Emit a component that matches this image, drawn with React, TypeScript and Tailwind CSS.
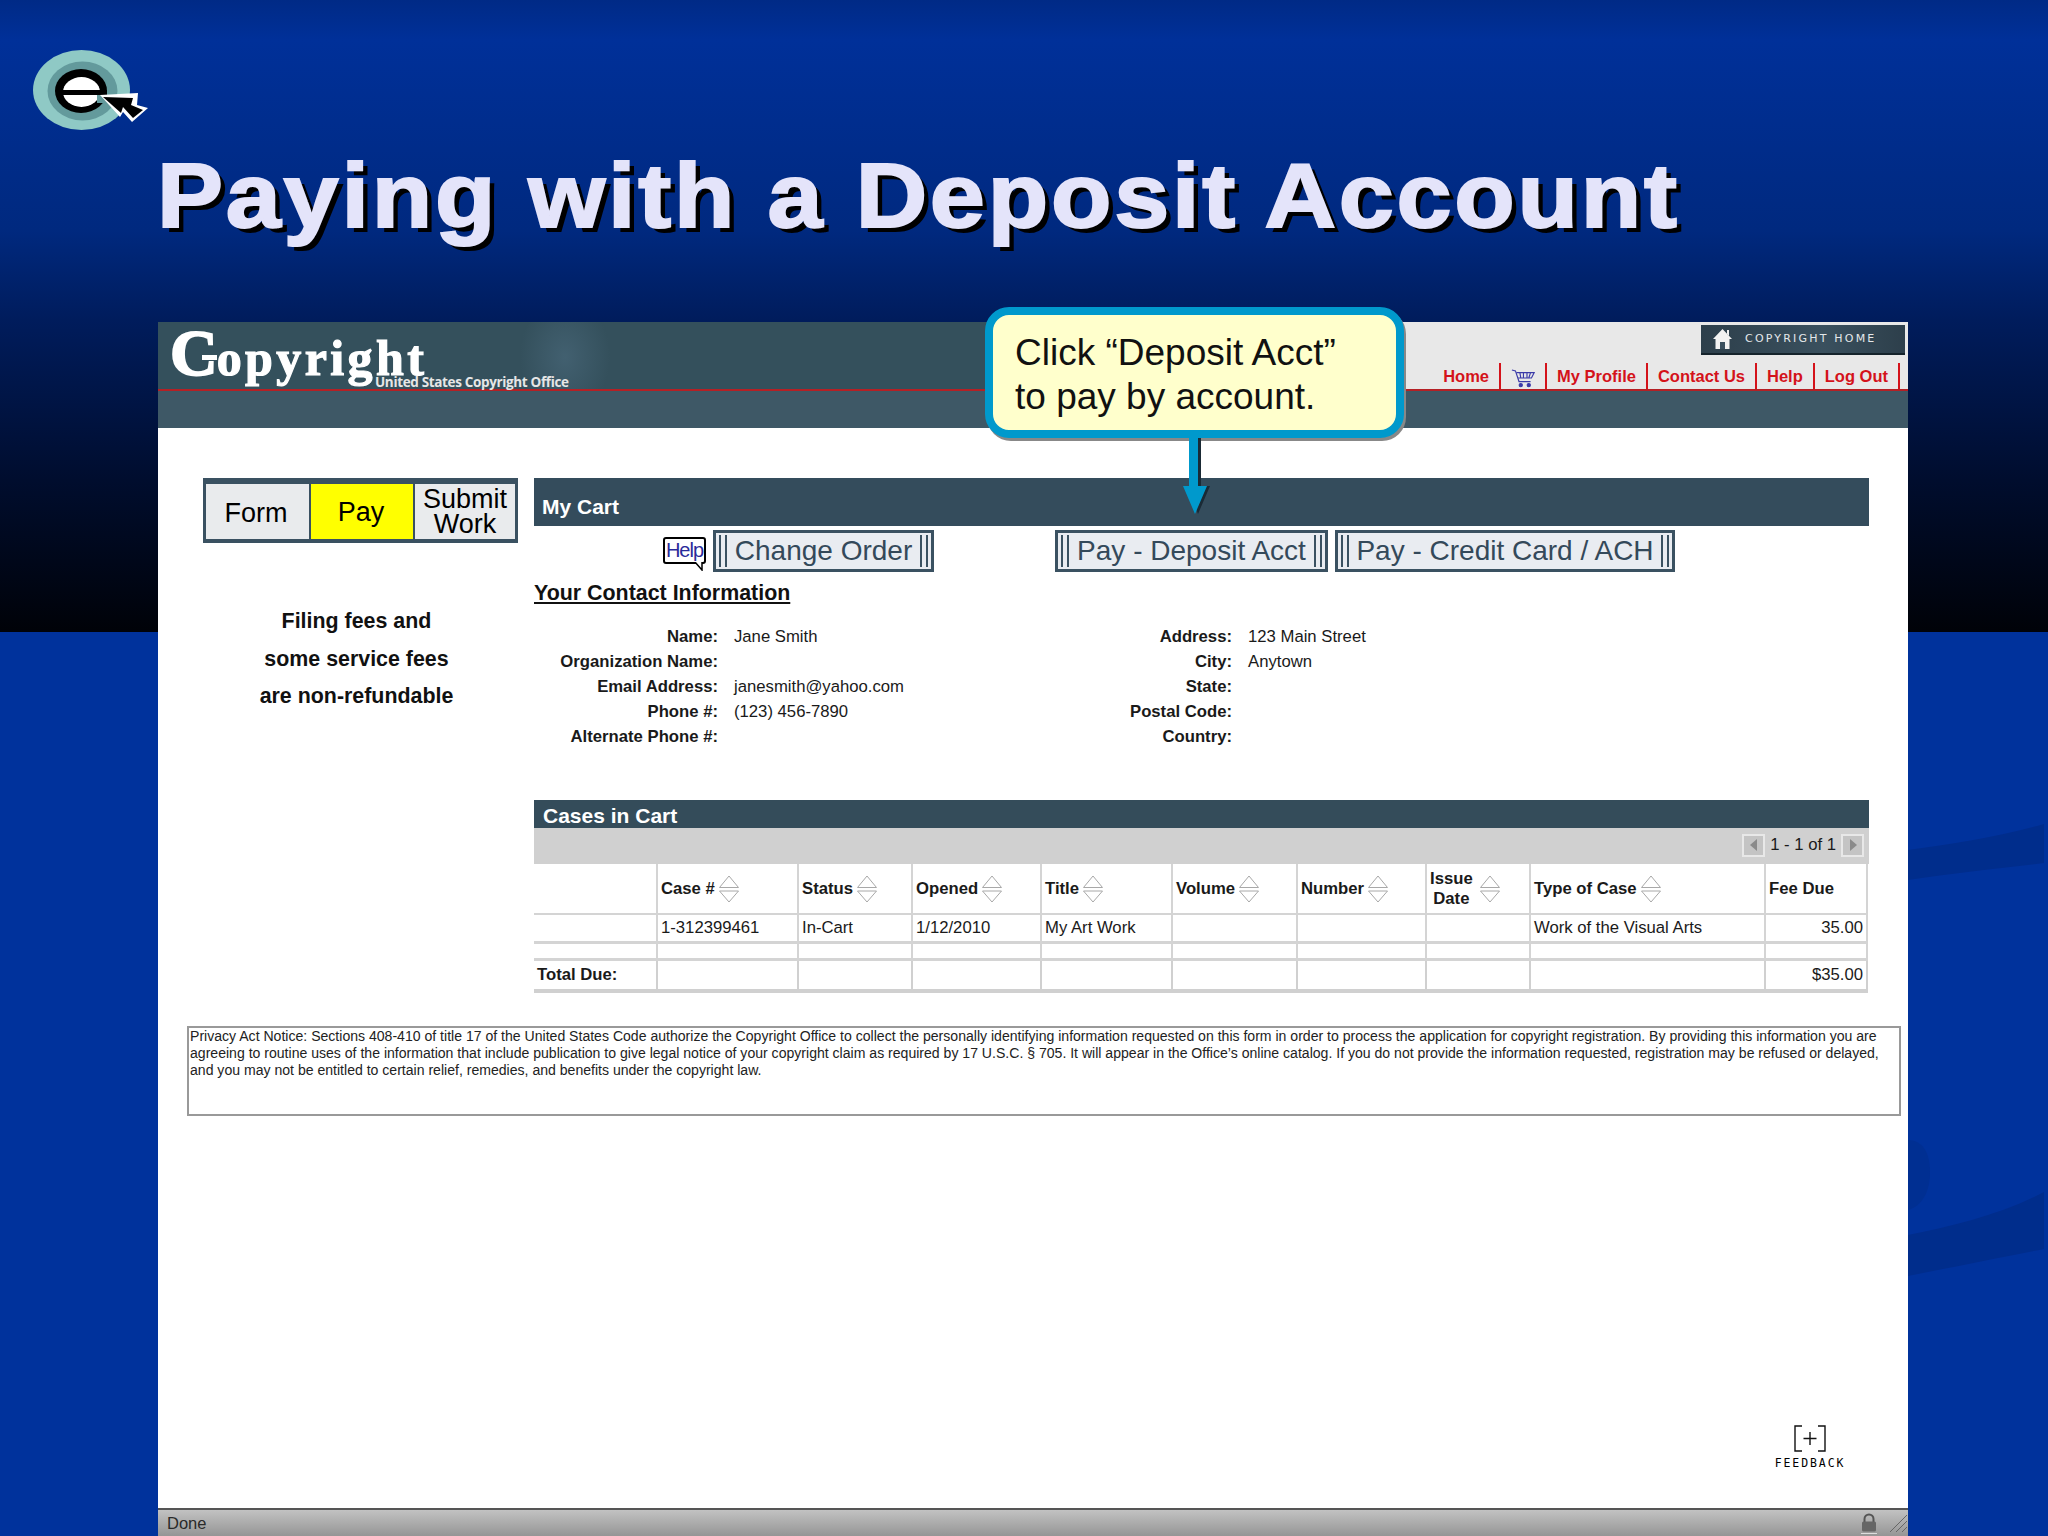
const sans = "font-['Liberation_Sans',Arial,sans-serif]";

function Logo() {
  return (
    <svg width="120" height="90" viewBox="0 0 120 90" className="block">
      <ellipse cx="48.5" cy="40" rx="48.5" ry="40" fill="#8fc9c5" />
      <ellipse cx="49.5" cy="41" rx="35" ry="29.5" fill="#639a9c" />
      <ellipse cx="48" cy="41" rx="26" ry="22" fill="#000" />
      <ellipse cx="48.5" cy="42" rx="18.5" ry="15" fill="#fff" />
      <rect x="28" y="40" width="46" height="5" fill="#000" />
      <rect x="64" y="45" width="12" height="8" fill="#639a9c" />
      <path d="M67 45 L105 43 L104 55 L115 58 L99 72 L90 62 L87 67 Z" fill="#fff" />
      <path d="M70 47 L100 48 L98 55 L110 60 L100 68 L90 57 L88 63 Z" fill="#000" />
    </svg>
  );
}

function SortIcon() {
  return (
    <svg width="22" height="28" viewBox="0 0 22 28" className="shrink-0">
      <path d="M1.5 12.5 L11 1 L20.5 12.5 Z M1.5 16 L11 27 L20.5 16 Z" fill="#fff" stroke="#a8a8a8" strokeWidth="1" />
    </svg>
  );
}

function Barred({ label, w }: { label: string; w: string }) {
  return (
    <div className={`${w} h-[42px] border-[3px] border-[#3a5161] bg-[#e9ecf1] flex items-center justify-between px-[3px] text-[28px] text-[#34495a]`}>
      <span className="w-[8px] h-[32px] border-x-[2px] border-[#3a5161]" />
      <span className="whitespace-nowrap">{label}</span>
      <span className="w-[8px] h-[32px] border-x-[2px] border-[#3a5161]" />
    </div>
  );
}

function Field({ label, value, w }: { label: string; value?: string; w: string }) {
  return (
    <div className="flex h-[25px] items-center">
      <span className={`${w} text-right font-bold whitespace-nowrap`}>{label}</span>
      <span className="ml-[16px] whitespace-nowrap">{value}</span>
    </div>
  );
}

const colWidths = ["w-[124px]", "w-[141px]", "w-[114px]", "w-[129px]", "w-[131px]", "w-[125px]", "w-[129px]", "w-[104px]", "w-[235px]", "w-[102px]"];
const headers = ["", "Case #", "Status", "Opened", "Title", "Volume", "Number", "", "Type of Case", "Fee Due"];

function HeaderCell({ label, index }: { label: string; index: number }) {
  if (index === 0) return <th className="border-r-2 border-[#d4d4d4] bg-white" />;
  if (index === 7) {
    return (
      <th className="border-r-2 border-[#d4d4d4] bg-white px-[3px] text-left font-bold">
        <div className="flex items-center gap-[6px] leading-[20px]">
          <span className="text-center">Issue<br />Date</span>
          <SortIcon />
        </div>
      </th>
    );
  }
  return (
    <th className="border-r-2 border-[#d4d4d4] bg-white px-[3px] text-left font-bold">
      <div className="flex items-center gap-[3px]">
        <span className="whitespace-nowrap">{label}</span>
        {index !== 9 && <SortIcon />}
      </div>
    </th>
  );
}

export default function App() {
  return (
    <div className={`relative w-[2048px] h-[1536px] overflow-hidden flex flex-col bg-[linear-gradient(180deg,#002a86_0px,#003099_40px,#00297f_230px,#001c5c_320px,#000d2e_480px,#000208_632px,#00329c_632px,#00329c_100%)] ${sans}`}>
      <svg width="140" height="904" viewBox="0 0 140 904" className="absolute right-0 top-[632px]">
        <path d="M0 218 C45 212 95 204 136 192 V231 C95 236 45 241 0 248 Z" fill="#002d8c" />
        <path d="M0 603 C45 594 95 582 136 560 V617 C95 625 45 635 0 644 Z" fill="#002d8c" />
        <path d="M0 508 C14 508 22 520 22 540 C22 560 14 574 0 578 Z" fill="#002f92" />
      </svg>

      <div className="relative h-[50px] shrink-0" />
      <div className="relative pl-[33px] h-[90px] shrink-0"><Logo /></div>
      <h1 className="relative pl-[157px] h-[182px] pt-[6px] shrink-0 text-[90px] leading-[100px] font-bold text-[#e4e4fa] [text-shadow:5px_5px_0_#000] [-webkit-text-stroke:2px_#e4e4fa] whitespace-nowrap">
        <span className="inline-block origin-left scale-x-[1.1] tracking-[2.5px]">Paying with a Deposit Account</span>
      </h1>

      <div className="relative ml-[158px] w-[1750px] flex-1 flex flex-col bg-white">
        <header className="h-[106px] shrink-0 flex flex-col bg-[#3e5866]">
          <div className="h-[69px] flex border-b-2 border-[#b52025]">
            <div className="w-[1244px] h-full relative bg-[#34505c] bg-[radial-gradient(ellipse_45px_60px_at_407px_35px,#426070,transparent)] text-white">
              <div className="flex items-baseline pl-[12px] mt-[1px] leading-none font-['Liberation_Serif',serif] font-bold">
                <span className="text-[66px] leading-[60px] -mr-[1px] [-webkit-text-stroke:2px_#fff]">C</span>
                <span className="text-[50px] tracking-[3.4px] [-webkit-text-stroke:1.2px_#fff]">opyright</span>
              </div>
              <span className="absolute left-[44px] top-[33px] w-[15px] h-[5px] bg-white" />
              <span className="absolute left-[217px] top-[50px] text-[13.5px] font-bold text-[#e6e6e6] whitespace-nowrap font-['Open_Sans',sans-serif] tracking-[-0.35px]">United States Copyright Office</span>
            </div>
            <div className="flex-1 bg-[#e8e8e8] flex flex-col items-end pr-[3px] pt-[3px]">
              <div className="w-[204px] h-[31px] bg-[linear-gradient(90deg,#2d3f4b,#3a505e_60%,#2d3f4b)] border-b-2 border-[#15232b] flex items-center pl-[11px] gap-[12px]">
                <svg width="21" height="22" viewBox="0 0 21 22"><path d="M10.5 1 L20 11 H17.5 V21 H3.5 V11 H1 Z" fill="#f2f2f2" /><path d="M15 2 h2 v6 l-2 -2 Z" fill="#f2f2f2" /><rect x="8" y="14" width="5" height="7" fill="#3a505e" /></svg>
                <span className="text-[11px] tracking-[2.2px] text-[#e4e8ea] font-['DejaVu_Sans',sans-serif] whitespace-nowrap">COPYRIGHT HOME</span>
              </div>
              <nav className="mt-[8px] flex items-center h-[26px] pr-[5px] text-[16.5px] font-bold text-[#d4121a]">
                <span>Home</span>
                <span className="mx-[10px] h-[26px] w-[2px] bg-[#d4121a]" />
                <svg width="24" height="20" viewBox="0 0 27 22" className="mt-[4px]" fill="none" stroke="#3a3aa8" strokeWidth="1.3">
                  <path d="M1 2 L5 3 L9 15 H22" />
                  <path d="M6 5 H26 L23 11 H8 M10 5 L11 11 M14 5 V11 M18 5 V11 M22 5 L20 11" />
                  <circle cx="11" cy="19" r="1.8" fill="#3a3aa8" /><circle cx="20" cy="19" r="1.8" fill="#3a3aa8" />
                </svg>
                <span className="mx-[10px] h-[26px] w-[2px] bg-[#d4121a]" />
                <span className="whitespace-nowrap">My Profile</span>
                <span className="mx-[10px] h-[26px] w-[2px] bg-[#d4121a]" />
                <span className="whitespace-nowrap">Contact Us</span>
                <span className="mx-[10px] h-[26px] w-[2px] bg-[#d4121a]" />
                <span>Help</span>
                <span className="mx-[10px] h-[26px] w-[2px] bg-[#d4121a]" />
                <span className="whitespace-nowrap">Log Out</span>
                <span className="ml-[10px] h-[26px] w-[2px] bg-[#d4121a]" />
              </nav>
            </div>
          </div>
        </header>

        <main className="flex-1 flex flex-col text-[16.7px] text-[#1a1a1a]">
          <div className="flex pt-[50px] pl-[45px] pr-[39px]">
            <aside className="w-[315px] shrink-0">
              <div className="h-[65px] bg-[#3a5161] flex gap-[2px] px-[3px] pt-[6px] pb-[4px] text-[27px] text-black">
                <div className="flex-1 bg-[#e9ebed] flex items-center justify-center pt-[3px] pr-[3px]">Form</div>
                <div className="flex-1 bg-[#ffff00] flex items-center justify-center pt-[2px] pr-[2px]">Pay</div>
                <div className="flex-1 bg-[#e9ebed] flex items-center justify-center text-center leading-[25px]">Submit<br />Work</div>
              </div>
              <p className="mt-[60px] pr-[8px] text-center text-[21.4px] leading-[37.5px] font-bold text-[#111]">
                Filing fees and<br />some service fees<br />are non-refundable
              </p>
            </aside>
            <section className="ml-[16px] flex-1 min-w-0">
              <div className="h-[48px] bg-[#344c5c] flex items-center pl-[8px] pt-[9px] text-[21px] font-bold text-white">My Cart</div>
              <div className="relative h-[46px] pt-[4px] flex">
                <div className="ml-[129px] mt-[7px] w-[43px] h-[27px] relative border-2 border-black rounded-[3px] text-[20px] leading-[22px] text-center text-[#2a2a9a] bg-white tracking-[-1px]">
                  Help
                  <svg width="10" height="9" viewBox="0 0 10 9" className="absolute right-[0px] -bottom-[9px]"><path d="M1 0 L8 8 V0" fill="#fff" stroke="#000" strokeWidth="1.5" /></svg>
                </div>
                <div className="ml-[7px]"><Barred label="Change Order" w="w-[221px]" /></div>
                <div className="ml-[121px]"><Barred label="Pay - Deposit Acct" w="w-[273px]" /></div>
                <div className="ml-[7px]"><Barred label="Pay - Credit Card / ACH" w="w-[340px]" /></div>
              </div>
              <h2 className="mt-[8px] text-[21.4px] leading-[26px] font-bold underline underline-offset-[2px] text-[#111]">Your Contact Information</h2>
              <div className="mt-[18px] flex">
                <div className="w-[514px]">
                  <Field label="Name:" value="Jane Smith" w="w-[184px]" />
                  <Field label="Organization Name:" w="w-[184px]" />
                  <Field label="Email Address:" value="janesmith@yahoo.com" w="w-[184px]" />
                  <Field label="Phone #:" value="(123) 456-7890" w="w-[184px]" />
                  <Field label="Alternate Phone #:" w="w-[184px]" />
                </div>
                <div>
                  <Field label="Address:" value="123 Main Street" w="w-[184px]" />
                  <Field label="City:" value="Anytown" w="w-[184px]" />
                  <Field label="State:" w="w-[184px]" />
                  <Field label="Postal Code:" w="w-[184px]" />
                  <Field label="Country:" w="w-[184px]" />
                </div>
              </div>

              <div className="mt-[51px] h-[28px] bg-[#344c5a] flex items-center pl-[9px] pt-[4px] text-[21px] font-bold text-white">Cases in Cart</div>
              <div className="h-[36px] bg-[#d0d0d0] flex items-center justify-end pr-[5px] pb-[2px] text-[#1a1a1a]">
                <span className="w-[23px] h-[23px] border-2 border-[#e8e8e8] bg-[#c4c4c4] flex items-center justify-center">
                  <svg width="8" height="12" viewBox="0 0 8 12"><path d="M7 0 V12 L0 6 Z" fill="#8a8a8a" /></svg>
                </span>
                <span className="mx-[5px] whitespace-nowrap">1 - 1 of 1</span>
                <span className="w-[23px] h-[23px] border-2 border-[#e8e8e8] bg-[#c4c4c4] flex items-center justify-center">
                  <svg width="8" height="12" viewBox="0 0 8 12"><path d="M1 0 V12 L8 6 Z" fill="#8a8a8a" /></svg>
                </span>
              </div>
              <table className="w-[1334px] table-fixed border-separate border-spacing-0 bg-[#d0d0d0]">
                <colgroup>
                  {colWidths.map((c, i) => <col key={i} className={c} />)}
                </colgroup>
                <thead>
                  <tr className="h-[49px]">
                    {headers.map((h, i) => <HeaderCell key={i} label={h} index={i} />)}
                  </tr>
                </thead>
                <tbody>
                  <tr className="h-[31px]">
                    {["", "1-312399461", "In-Cart", "1/12/2010", "My Art Work", "", "", "", "Work of the Visual Arts", "35.00"].map((t, i) => (
                      <td key={i} className={`border-t-2 border-b-[3px] border-r-2 border-[#d4d4d4] bg-white px-[3px] ${i === 9 ? "text-right" : "text-left"} whitespace-nowrap`}>{t}</td>
                    ))}
                  </tr>
                  <tr className="h-[17px]">
                    {headers.map((_, i) => <td key={i} className="border-b-[3px] border-r-2 border-[#d4d4d4] bg-white" />)}
                  </tr>
                  <tr className="h-[32px]">
                    {["Total Due:", "", "", "", "", "", "", "", "", "$35.00"].map((t, i) => (
                      <td key={i} className={`border-b-[4px] border-r-2 border-[#d0d0d0] bg-white px-[3px] ${i === 9 ? "text-right" : "text-left"} ${i === 0 ? "font-bold" : ""} whitespace-nowrap`}>{t}</td>
                    ))}
                  </tr>
                </tbody>
              </table>
            </section>
          </div>

          <div className="mt-[33px] ml-[29px] w-[1714px] h-[90px] border-2 border-[#999] px-[1px] text-[14.07px] leading-[17px] text-[#222] whitespace-nowrap">
            Privacy Act Notice: Sections 408-410 of title 17 of the United States Code authorize the Copyright Office to collect the personally identifying information requested on this form in order to process the application for copyright registration. By providing this information you are<br />
            agreeing to routine uses of the information that include publication to give legal notice of your copyright claim as required by 17 U.S.C. § 705. It will appear in the Office’s online catalog. If you do not provide the information requested, registration may be refused or delayed,<br />
            and you may not be entitled to certain relief, remedies, and benefits under the copyright law.
          </div>

          <div className="flex-1 flex flex-col items-end justify-end pr-[62px] pb-[39px]">
            <div className="flex flex-col items-center w-[72px] font-['DejaVu_Sans_Mono',monospace] text-black">
              <svg width="32" height="27" viewBox="0 0 32 27" fill="none" stroke="#111" strokeWidth="1.4"><path d="M8 1 H1 V26 H8 M24 1 H31 V26 H24 M16 7 V20 M9.5 13.5 H22.5" /></svg>
              <span className="mt-[5px] text-[11.5px] leading-[12px] tracking-[1.9px] whitespace-nowrap">FEEDBACK</span>
            </div>
          </div>
        </main>

        <footer className="h-[28px] shrink-0 border-t-2 border-[#555] bg-[linear-gradient(180deg,#c2c2c2,#959595)] flex items-center pl-[9px] pr-[1px] text-[16.5px] text-[#2a2a2a]">
          <span>Done</span>
          <span className="flex-1" />
          <svg width="16" height="21" viewBox="0 0 16 21" className="mr-[13px]">
            <path d="M3.5 9 V6 a4.5 4.5 0 0 1 9 0 V9" fill="none" stroke="#555" strokeWidth="2" />
            <rect x="1" y="8.5" width="14" height="10" rx="1.5" fill="#666" />
            <rect x="0" y="20" width="16" height="1" fill="#ddd" />
          </svg>
          <svg width="17" height="18" viewBox="0 0 17 18" stroke="#666" strokeWidth="1" fill="none"><path d="M0 18 L17 1 M6 18 L17 7 M12 18 L17 13" /></svg>
        </footer>

        <div className="absolute left-[827px] -top-[15px] w-[419px] h-[131px] rounded-[24px] border-[8px] border-[#0099cc] bg-[#ffffcc] pl-[22px] pt-[16px] text-[37px] leading-[44px] text-[#111] shadow-[2px_3px_0_#888] whitespace-nowrap">
          Click “Deposit Acct”<br />to pay by account.
        </div>
        <svg width="34" height="78" viewBox="0 0 34 78" className="absolute left-[1022px] top-[116px]">
          <path d="M11 0 H21 V48 H30 L18 76 L8 48 H11 Z" fill="#1a2a35" />
          <path d="M9 0 H18 V48 H27 L15 76 L3 48 H9 Z" fill="#0099cc" />
        </svg>
      </div>
    </div>
  );
}
